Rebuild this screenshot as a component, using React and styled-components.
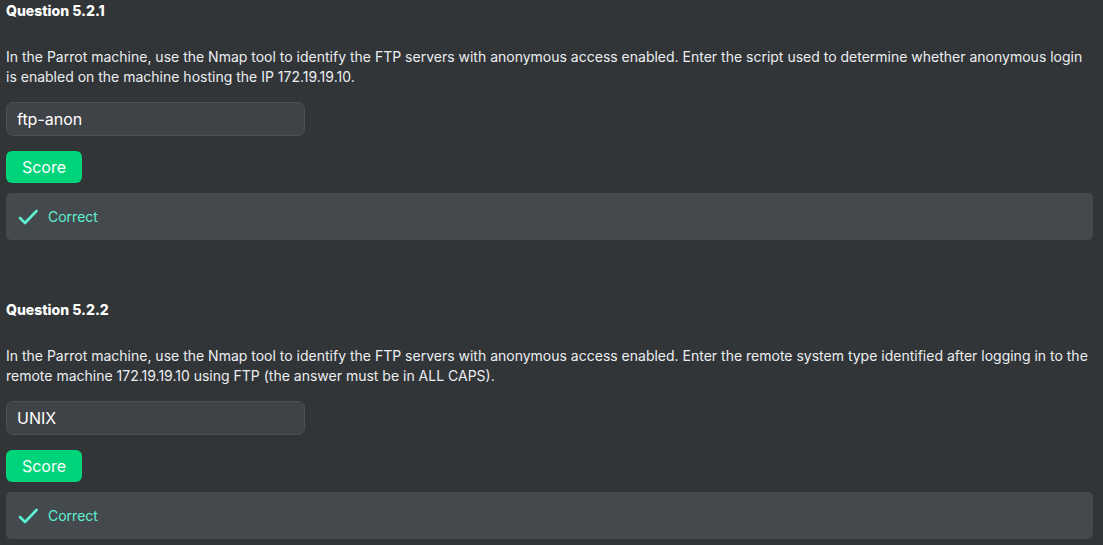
import { Fragment } from "react"
import styled, { createGlobalStyle } from "styled-components"

const GlobalStyle = createGlobalStyle`
   html, body {
      margin: 0;
      padding: 0;
      background: #313538;
   }
   body {
      font-family: Inter, "Noto Sans", sans-serif;
      color: #f2f3f4;
   }
`
const Page = styled.div`
   padding: 1px 10px 0 6px;
   display: flex;
   flex-direction: column;
   gap: 60px;
`
const Question = styled.section`
   display: flex;
   flex-direction: column;
   align-items: flex-start;
`
const Title = styled.h3`
   margin: 0;
   font-size: 14px;
   font-weight: 800;
   line-height: 20px;
   color: #ffffff;
`
const Text = styled.p`
   margin: 26px 0 0 0;
   font-size: 14px;
   line-height: 20px;
   color: #eceef0;
`
const Input = styled.input`
   margin-top: 15px;
   box-sizing: border-box;
   width: 299px;
   height: 34px;
   padding: 0 10px;
   border: 1px solid #4b5055;
   border-radius: 7px;
   background: #3f4347;
   color: #ffffff;
   font-family: Inter, sans-serif;
   font-size: 16px;
   outline: none;
`
const ScoreButton = styled.button`
   margin-top: 15px;
   height: 32px;
   width: 76px;
   border: none;
   border-radius: 6px;
   background: #00d47a;
   color: #ffffff;
   font-family: Inter, sans-serif;
   font-size: 16px;
   cursor: pointer;
`
const Result = styled.div`
   margin-top: 10px;
   align-self: stretch;
   box-sizing: border-box;
   height: 47px;
   display: flex;
   align-items: center;
   gap: 10px;
   padding: 0 12px;
   border-radius: 5px;
   background: #44494d;
   color: #5ef0d3;
   font-size: 14px;
`

const Check = () => (
   <svg width="20" height="18" viewBox="0 0 20 18" fill="none">
      <path d="M2 10 L7 15 L18.5 3" stroke="#5ef0d3" strokeWidth="2.6" strokeLinecap="round" strokeLinejoin="round" />
   </svg>
)

const questions = [
   {
      id: "5.2.1",
      text: "In the Parrot machine, use the Nmap tool to identify the FTP servers with anonymous access enabled. Enter the script used to determine whether anonymous login is enabled on the machine hosting the IP 172.19.19.10.",
      answer: "ftp-anon",
   },
   {
      id: "5.2.2",
      text: "In the Parrot machine, use the Nmap tool to identify the FTP servers with anonymous access enabled. Enter the remote system type identified after logging in to the remote machine 172.19.19.10 using FTP (the answer must be in ALL CAPS).",
      answer: "UNIX",
   },
]

const App = () => {
   return(
      <Fragment>
         <GlobalStyle />
         <Page>
            {questions.map(q => (
               <Question key={q.id}>
                  <Title>Question {q.id}</Title>
                  <Text>{q.text}</Text>
                  <Input defaultValue={q.answer} readOnly />
                  <ScoreButton>Score</ScoreButton>
                  <Result>
                     <Check />
                     Correct
                  </Result>
               </Question>
            ))}
         </Page>
      </Fragment>
   )
}

export default App
